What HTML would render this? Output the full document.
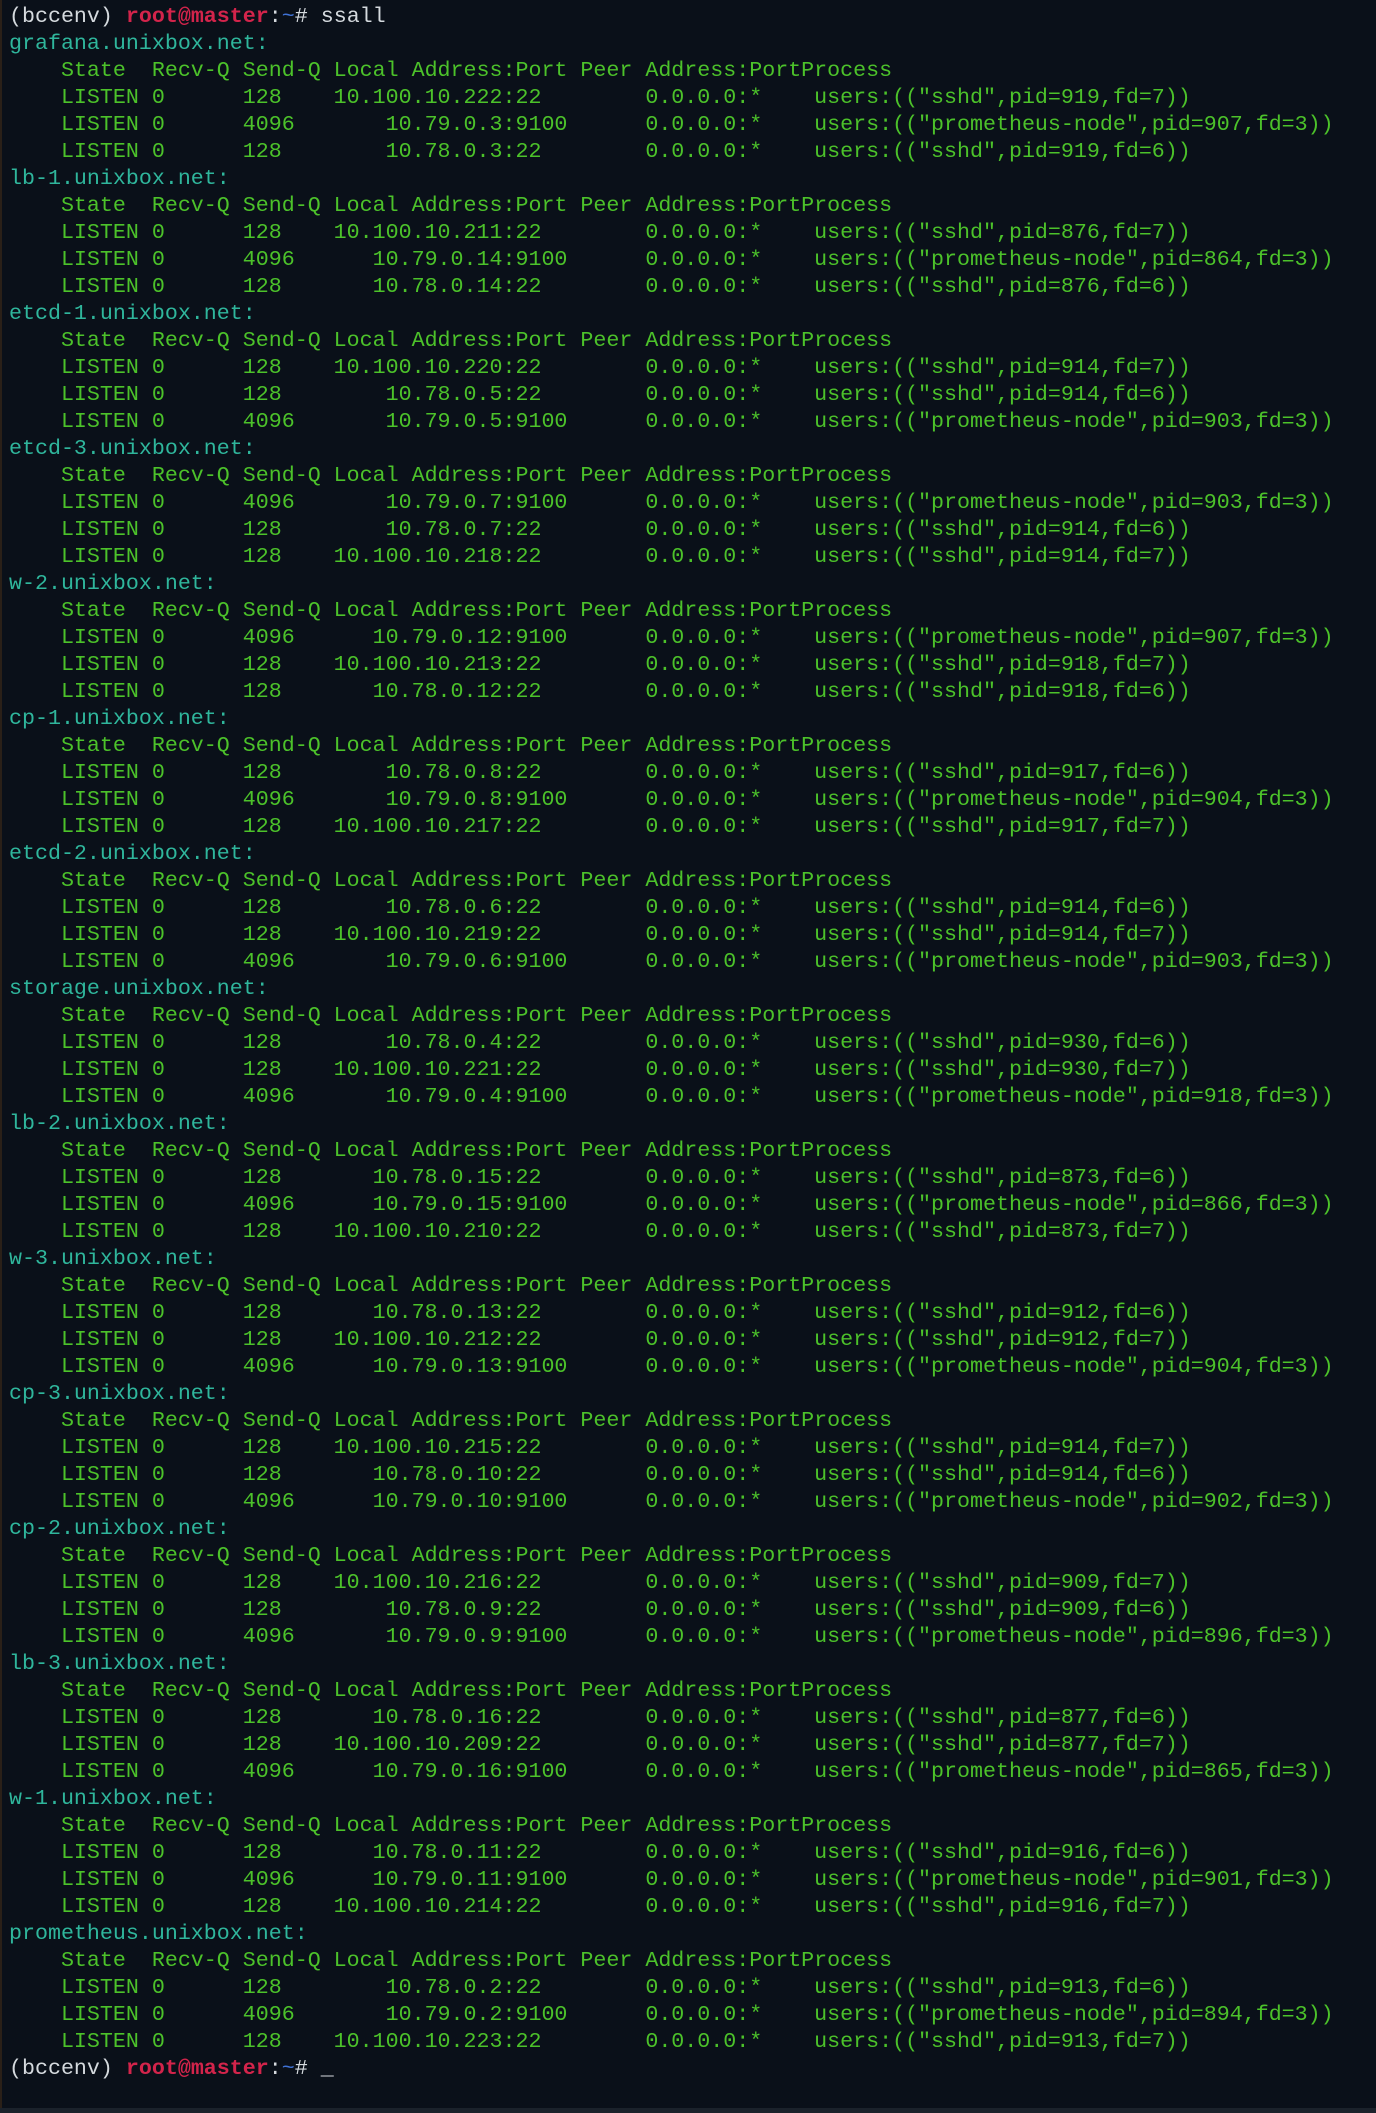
<!DOCTYPE html>
<html><head><meta charset="utf-8"><style>
html,body{margin:0;padding:0;background:#0a1019;width:1376px;height:2113px;overflow:hidden}
pre{margin:0;padding:3px 0 0 9px;font-family:"Liberation Mono",monospace;font-size:21.65px;line-height:27px;color:#4cc22a;white-space:pre}
.w{color:#d5dade}.r{color:#d3244b;font-weight:bold}.b{color:#3f72d6}.h{color:#2fb69c}
.bar{position:absolute;left:0;top:2108px;width:1376px;height:5px;background:#1b222b}
.edge{position:absolute;left:0;top:0;width:2px;height:2113px;background:#2a2018}
</style></head><body><div class="edge"></div><pre><span class="w">(bccenv) </span><span class="r">root@master</span><span class="w">:</span><span class="b">~</span><span class="w"># ssall</span>
<span class="h">grafana.unixbox.net:</span>
    State  Recv-Q Send-Q Local Address:Port Peer Address:PortProcess
    LISTEN 0      128    10.100.10.222:22        0.0.0.0:*    users:(("sshd",pid=919,fd=7))
    LISTEN 0      4096       10.79.0.3:9100      0.0.0.0:*    users:(("prometheus-node",pid=907,fd=3))
    LISTEN 0      128        10.78.0.3:22        0.0.0.0:*    users:(("sshd",pid=919,fd=6))
<span class="h">lb-1.unixbox.net:</span>
    State  Recv-Q Send-Q Local Address:Port Peer Address:PortProcess
    LISTEN 0      128    10.100.10.211:22        0.0.0.0:*    users:(("sshd",pid=876,fd=7))
    LISTEN 0      4096      10.79.0.14:9100      0.0.0.0:*    users:(("prometheus-node",pid=864,fd=3))
    LISTEN 0      128       10.78.0.14:22        0.0.0.0:*    users:(("sshd",pid=876,fd=6))
<span class="h">etcd-1.unixbox.net:</span>
    State  Recv-Q Send-Q Local Address:Port Peer Address:PortProcess
    LISTEN 0      128    10.100.10.220:22        0.0.0.0:*    users:(("sshd",pid=914,fd=7))
    LISTEN 0      128        10.78.0.5:22        0.0.0.0:*    users:(("sshd",pid=914,fd=6))
    LISTEN 0      4096       10.79.0.5:9100      0.0.0.0:*    users:(("prometheus-node",pid=903,fd=3))
<span class="h">etcd-3.unixbox.net:</span>
    State  Recv-Q Send-Q Local Address:Port Peer Address:PortProcess
    LISTEN 0      4096       10.79.0.7:9100      0.0.0.0:*    users:(("prometheus-node",pid=903,fd=3))
    LISTEN 0      128        10.78.0.7:22        0.0.0.0:*    users:(("sshd",pid=914,fd=6))
    LISTEN 0      128    10.100.10.218:22        0.0.0.0:*    users:(("sshd",pid=914,fd=7))
<span class="h">w-2.unixbox.net:</span>
    State  Recv-Q Send-Q Local Address:Port Peer Address:PortProcess
    LISTEN 0      4096      10.79.0.12:9100      0.0.0.0:*    users:(("prometheus-node",pid=907,fd=3))
    LISTEN 0      128    10.100.10.213:22        0.0.0.0:*    users:(("sshd",pid=918,fd=7))
    LISTEN 0      128       10.78.0.12:22        0.0.0.0:*    users:(("sshd",pid=918,fd=6))
<span class="h">cp-1.unixbox.net:</span>
    State  Recv-Q Send-Q Local Address:Port Peer Address:PortProcess
    LISTEN 0      128        10.78.0.8:22        0.0.0.0:*    users:(("sshd",pid=917,fd=6))
    LISTEN 0      4096       10.79.0.8:9100      0.0.0.0:*    users:(("prometheus-node",pid=904,fd=3))
    LISTEN 0      128    10.100.10.217:22        0.0.0.0:*    users:(("sshd",pid=917,fd=7))
<span class="h">etcd-2.unixbox.net:</span>
    State  Recv-Q Send-Q Local Address:Port Peer Address:PortProcess
    LISTEN 0      128        10.78.0.6:22        0.0.0.0:*    users:(("sshd",pid=914,fd=6))
    LISTEN 0      128    10.100.10.219:22        0.0.0.0:*    users:(("sshd",pid=914,fd=7))
    LISTEN 0      4096       10.79.0.6:9100      0.0.0.0:*    users:(("prometheus-node",pid=903,fd=3))
<span class="h">storage.unixbox.net:</span>
    State  Recv-Q Send-Q Local Address:Port Peer Address:PortProcess
    LISTEN 0      128        10.78.0.4:22        0.0.0.0:*    users:(("sshd",pid=930,fd=6))
    LISTEN 0      128    10.100.10.221:22        0.0.0.0:*    users:(("sshd",pid=930,fd=7))
    LISTEN 0      4096       10.79.0.4:9100      0.0.0.0:*    users:(("prometheus-node",pid=918,fd=3))
<span class="h">lb-2.unixbox.net:</span>
    State  Recv-Q Send-Q Local Address:Port Peer Address:PortProcess
    LISTEN 0      128       10.78.0.15:22        0.0.0.0:*    users:(("sshd",pid=873,fd=6))
    LISTEN 0      4096      10.79.0.15:9100      0.0.0.0:*    users:(("prometheus-node",pid=866,fd=3))
    LISTEN 0      128    10.100.10.210:22        0.0.0.0:*    users:(("sshd",pid=873,fd=7))
<span class="h">w-3.unixbox.net:</span>
    State  Recv-Q Send-Q Local Address:Port Peer Address:PortProcess
    LISTEN 0      128       10.78.0.13:22        0.0.0.0:*    users:(("sshd",pid=912,fd=6))
    LISTEN 0      128    10.100.10.212:22        0.0.0.0:*    users:(("sshd",pid=912,fd=7))
    LISTEN 0      4096      10.79.0.13:9100      0.0.0.0:*    users:(("prometheus-node",pid=904,fd=3))
<span class="h">cp-3.unixbox.net:</span>
    State  Recv-Q Send-Q Local Address:Port Peer Address:PortProcess
    LISTEN 0      128    10.100.10.215:22        0.0.0.0:*    users:(("sshd",pid=914,fd=7))
    LISTEN 0      128       10.78.0.10:22        0.0.0.0:*    users:(("sshd",pid=914,fd=6))
    LISTEN 0      4096      10.79.0.10:9100      0.0.0.0:*    users:(("prometheus-node",pid=902,fd=3))
<span class="h">cp-2.unixbox.net:</span>
    State  Recv-Q Send-Q Local Address:Port Peer Address:PortProcess
    LISTEN 0      128    10.100.10.216:22        0.0.0.0:*    users:(("sshd",pid=909,fd=7))
    LISTEN 0      128        10.78.0.9:22        0.0.0.0:*    users:(("sshd",pid=909,fd=6))
    LISTEN 0      4096       10.79.0.9:9100      0.0.0.0:*    users:(("prometheus-node",pid=896,fd=3))
<span class="h">lb-3.unixbox.net:</span>
    State  Recv-Q Send-Q Local Address:Port Peer Address:PortProcess
    LISTEN 0      128       10.78.0.16:22        0.0.0.0:*    users:(("sshd",pid=877,fd=6))
    LISTEN 0      128    10.100.10.209:22        0.0.0.0:*    users:(("sshd",pid=877,fd=7))
    LISTEN 0      4096      10.79.0.16:9100      0.0.0.0:*    users:(("prometheus-node",pid=865,fd=3))
<span class="h">w-1.unixbox.net:</span>
    State  Recv-Q Send-Q Local Address:Port Peer Address:PortProcess
    LISTEN 0      128       10.78.0.11:22        0.0.0.0:*    users:(("sshd",pid=916,fd=6))
    LISTEN 0      4096      10.79.0.11:9100      0.0.0.0:*    users:(("prometheus-node",pid=901,fd=3))
    LISTEN 0      128    10.100.10.214:22        0.0.0.0:*    users:(("sshd",pid=916,fd=7))
<span class="h">prometheus.unixbox.net:</span>
    State  Recv-Q Send-Q Local Address:Port Peer Address:PortProcess
    LISTEN 0      128        10.78.0.2:22        0.0.0.0:*    users:(("sshd",pid=913,fd=6))
    LISTEN 0      4096       10.79.0.2:9100      0.0.0.0:*    users:(("prometheus-node",pid=894,fd=3))
    LISTEN 0      128    10.100.10.223:22        0.0.0.0:*    users:(("sshd",pid=913,fd=7))
<span class="w">(bccenv) </span><span class="r">root@master</span><span class="w">:</span><span class="b">~</span><span class="w"># _</span></pre><div class="bar"></div></body></html>
